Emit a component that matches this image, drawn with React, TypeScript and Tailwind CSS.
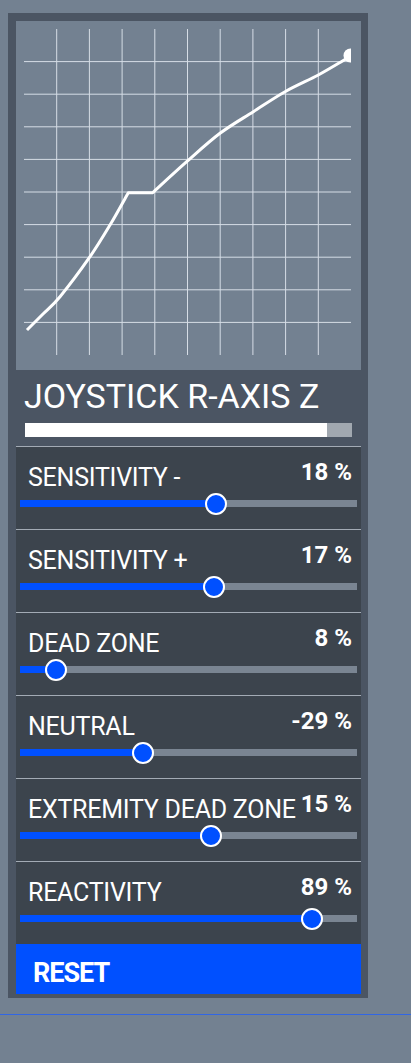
import React from "react";

const rows = [
  { label: "SENSITIVITY -", value: "18 %", thumb: 216 },
  { label: "SENSITIVITY +", value: "17 %", thumb: 214 },
  { label: "DEAD ZONE", value: "8 %", thumb: 56 },
  { label: "NEUTRAL", value: "-29 %", thumb: 142.5 },
  { label: "EXTREMITY DEAD ZONE", value: "15 %", thumb: 211 },
  { label: "REACTIVITY", value: "89 %", thumb: 311.5 },
];

function smooth(pts: number[][]) {
  let d = `M${pts[0][0]},${pts[0][1]}`;
  for (let i = 0; i < pts.length - 1; i++) {
    const p0 = pts[i - 1] || pts[i];
    const p1 = pts[i];
    const p2 = pts[i + 1];
    const p3 = pts[i + 2] || p2;
    const c1x = p1[0] + (p2[0] - p0[0]) / 6;
    const c1y = p1[1] + (p2[1] - p0[1]) / 6;
    const c2x = p2[0] - (p3[0] - p1[0]) / 6;
    const c2y = p2[1] - (p3[1] - p1[1]) / 6;
    d += ` C${c1x},${c1y} ${c2x},${c2y} ${p2[0]},${p2[1]}`;
  }
  return d;
}

function Graph() {
  const vx = [1, 2, 3, 4, 5, 6, 7, 8, 9].map((i) => 24 + 32.7 * i);
  const hy = [1, 2, 3, 4, 5, 6, 7, 8, 9].map((i) => 29 + 32.6 * i);
  const lower = [
    [27, 330],
    [43, 314],
    [60, 296.7],
    [89.3, 257.7],
    [110, 225],
    [128.3, 192.7],
  ];
  const upper = [
    [152.7, 192.7],
    [186.7, 161.7],
    [220, 133.3],
    [253.3, 111.7],
    [285, 91.7],
    [318.3, 75],
    [343.3, 60.5],
    [350, 56.5],
  ];
  const d = smooth(lower) + ` L152.7,192.7 ` + smooth(upper).replace(/^M[^ ]+/, "");
  return (
    <svg width="345" height="349" viewBox="16 21 345 349" className="block">
      <defs>
        <clipPath id="gc">
          <rect x="16" y="21" width="335" height="349" />
        </clipPath>
      </defs>
      {vx.map((x) => (
        <line key={"v" + x} x1={x} x2={x} y1={29} y2={355} stroke="#d6dde6" strokeWidth="1" />
      ))}
      {hy.map((y) => (
        <line key={"h" + y} x1={24} x2={351} y1={y} y2={y} stroke="#d6dde6" strokeWidth="1" />
      ))}
      <g clipPath="url(#gc)">
        <path d={d} fill="none" stroke="#ffffff" strokeWidth="3" strokeLinejoin="round" />
        <circle cx="350.5" cy="55.5" r="7" fill="#ffffff" />
      </g>
    </svg>
  );
}

function SliderRow({ label, value, thumb }: { label: string; value: string; thumb: number }) {
  const left = thumb - 20;
  return (
    <div className="h-[83px] border-t border-[#a3abb5] bg-[#3c444d] relative">
      <div className="flex justify-between items-start">
        <div className="pl-[12px] mt-[18px] text-[25px] leading-none text-white tracking-[-0.25px] whitespace-nowrap">
          {label}
        </div>
        <div className="pr-[9px] mt-[13px] text-[24px] leading-none font-bold text-white whitespace-nowrap">
          {value}
        </div>
      </div>
      <div className="absolute left-[4px] right-[4px] top-[53px] h-[7px] bg-[#7a8592]">
        <div className="absolute left-0 top-0 h-full bg-[#0050ff]" style={{ width: left }} />
        <div
          className="absolute top-[-7px] w-[22px] h-[22px] rounded-full bg-[#0050ff] border-[2px] border-white"
          style={{ left: left - 11 }}
        />
      </div>
    </div>
  );
}

export default function App() {
  return (
    <div
      className="min-h-[1063px] bg-[#738191] pt-[13px] relative"
      style={{ fontFamily: "Roboto, 'Noto Sans', sans-serif" }}
    >
      <div className="ml-[8px] w-[360px] bg-[#4b5563] pl-[8px] pr-[7px] pt-[8px] pb-[4px]">
        <div className="bg-[#738191]">
          <Graph />
        </div>
        <div className="h-[76px] pt-[9px]">
          <div className="pl-[8px] text-[34px] leading-none text-white whitespace-nowrap">
            JOYSTICK R-AXIS Z
          </div>
          <div className="ml-[9px] mt-[10px] w-[327px] h-[14px] bg-[#a1a8b0]">
            <div className="h-full w-[302px] bg-white" />
          </div>
        </div>
        {rows.map((r) => (
          <SliderRow key={r.label} {...r} />
        ))}
        <div className="h-[50px] bg-[#0050ff] pl-[17px] pt-[16px]">
          <div className="text-[27px] leading-none font-bold text-white tracking-[-1px]">RESET</div>
        </div>
      </div>
      <div className="mt-[16px] h-[1px] bg-[#3166e6]" />
    </div>
  );
}
